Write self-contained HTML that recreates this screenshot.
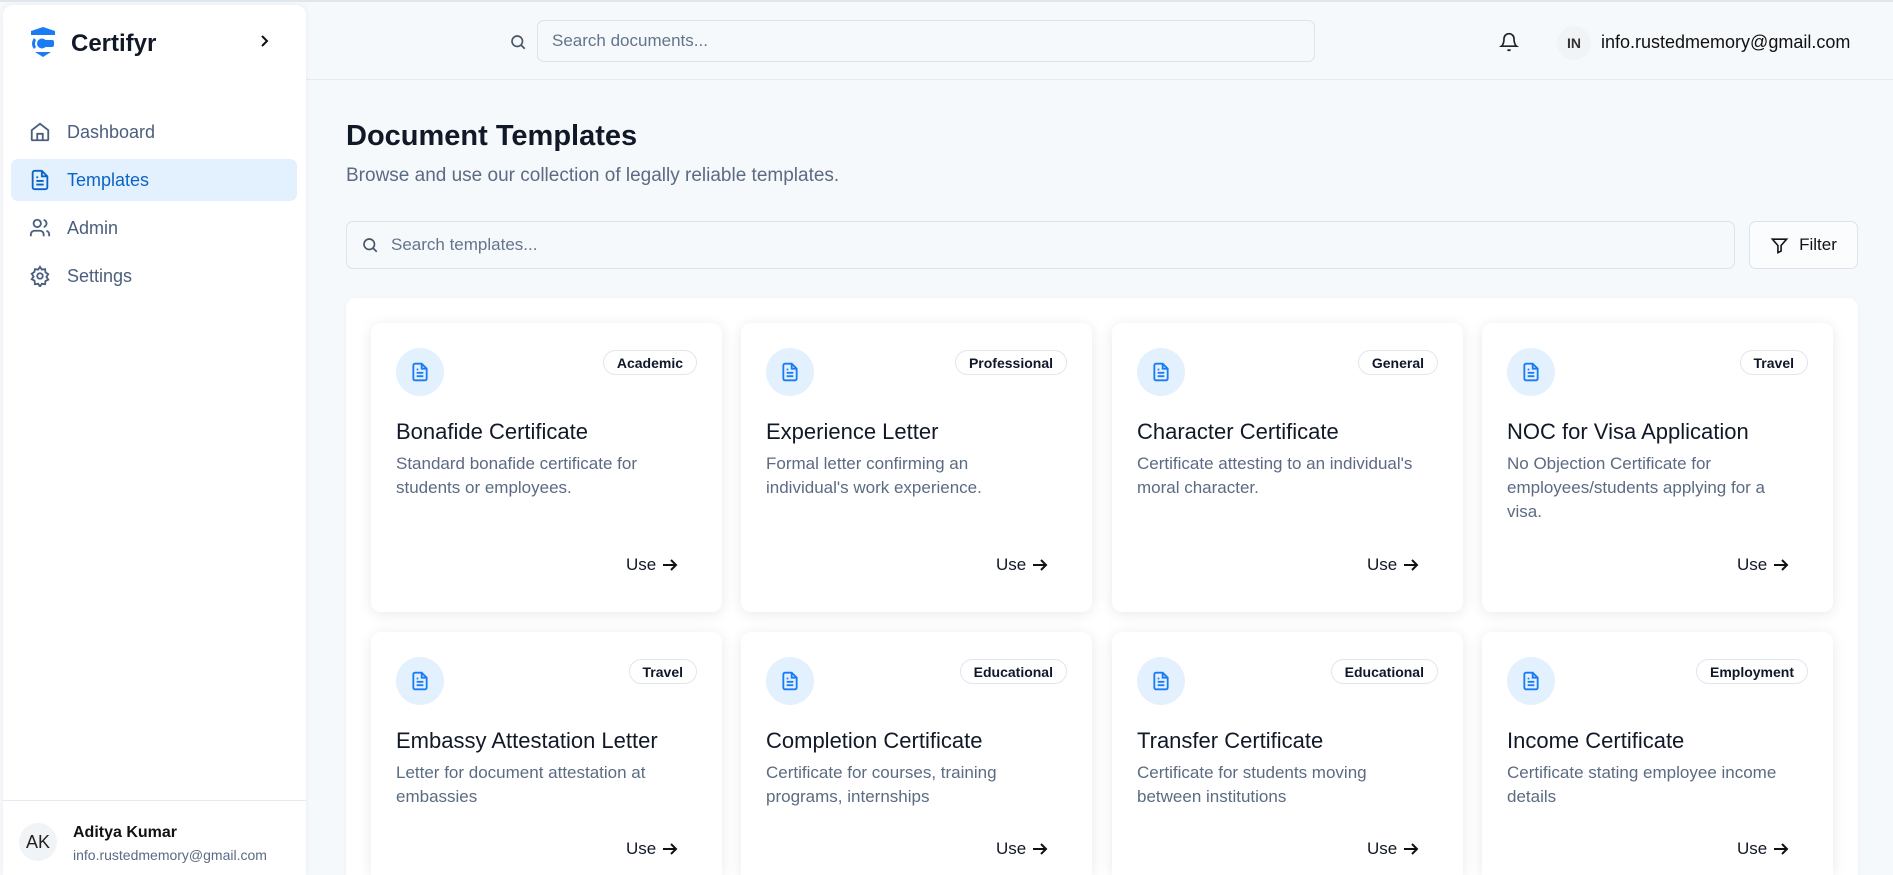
<!DOCTYPE html>
<html><head><meta charset="utf-8"><style>
*{box-sizing:border-box;margin:0;padding:0}
html,body{width:1893px;height:875px;overflow:hidden}
body{background:#f6f9fc;font-family:"Liberation Sans",Arial,sans-serif;color:#0f172a}
#wrap{position:relative;width:1893px;height:875px;overflow:hidden;border-top:2px solid #dfe7ec}
.side{position:absolute;left:3px;top:3px;width:303px;height:870px;background:#fff;border-radius:10px 10px 0 0;box-shadow:0 0 6px rgba(0,0,0,.06);z-index:2}
.logo{position:absolute;left:26px;top:22px;display:flex;align-items:center;gap:14px;font-size:24px;font-weight:bold;color:#111827}
.chev{position:absolute;left:256px;top:29px}
.nav{position:absolute;left:8px;width:286px;height:42px;display:flex;align-items:center;padding-left:18px;gap:16px;font-size:18px;color:#4a5f7d;border-radius:7px}
.nav.act{background:#e3f0fd;color:#0a64c8}
.foot{position:absolute;left:0;top:795px;width:303px;border-top:1px solid #e6ebf0;height:75px}
.av{position:absolute;width:38px;height:38px;border-radius:50%;background:#f1f4f7;display:flex;align-items:center;justify-content:center}
.top{position:absolute;left:306px;top:0;right:0;height:78px;border-bottom:1px solid #e5eaef}
.inp{position:absolute;border:1px solid #dde3ea;border-radius:7px;background:#f6f9fc;display:flex;align-items:center;color:#64748b;font-size:17px}
h1{position:absolute;left:346px;top:118px;font-size:29px;font-weight:bold;color:#111827}
.sub{position:absolute;left:346px;top:163px;font-size:19px;color:#5b6b82}
.panel{position:absolute;left:346px;top:296px;width:1512px;height:577px;background:#fff;border-radius:10px 10px 0 0;box-shadow:0 1px 4px rgba(0,0,0,.05)}
.card{position:absolute;width:351px;height:289px;background:#fff;border-radius:10px;box-shadow:0 2px 14px rgba(0,0,0,.09)}
.r2{height:243px;border-radius:10px 10px 0 0}
.ic{position:absolute;left:25px;top:25px;width:48px;height:48px;border-radius:50%;background:#e3f0fd;display:flex;align-items:center;justify-content:center}
.bd{position:absolute;right:25px;top:27px;height:25px;padding:0 13px;border:1px solid #e1e6ec;border-radius:13px;font-size:14px;font-weight:bold;display:flex;align-items:center}
.ct{position:absolute;left:25px;top:96px;font-size:22px;color:#111827}
.cd{position:absolute;left:25px;top:129px;white-space:nowrap;font-size:17px;line-height:24px;color:#5b6b82}
.use{position:absolute;left:255px;top:232px;font-size:17px;display:flex;align-items:center;gap:6px;color:#111827}
.r2 .use{top:207px}
</style></head><body><div id="wrap">
<div class="side">
 <div class="logo"><svg width="28" height="34" viewBox="0 0 28 34"><path d="M2 4 L14 0 L26 4 L26 8 L2 8Z" fill="#1a7cf5"/><path d="M5 11 Q1 17 5 22 L7 20 Q5 17 7 13Z" fill="#1a7cf5"/><circle cx="13" cy="16.5" r="5" fill="#1a7cf5"/><rect x="13" y="13" width="12" height="7" rx="2" fill="#1a7cf5"/><path d="M6 25 L22 25 L14 30Z" fill="#1a7cf5"/></svg>Certifyr</div>
 <svg class="chev" width="12" height="14" viewBox="0 0 12 14"><path d="M3 2 L8 7 L3 12" stroke="#111" stroke-width="2" fill="none"/></svg>
 <div class="nav" style="top:106px"><svg width="22" height="22" viewBox="0 0 24 24" fill="none" stroke="#4a5f7d" stroke-width="2"><path d="M3 10 L12 3 L21 10 V20 a1 1 0 0 1-1 1 H4 a1 1 0 0 1-1-1Z"/><path d="M9 21 V14 H15 V21"/></svg>Dashboard</div>
 <div class="nav act" style="top:154px"><svg width="22" height="22" viewBox="0 0 24 24" fill="none" stroke="#0a64c8" stroke-width="2"><path d="M14 2H6a2 2 0 0 0-2 2v16a2 2 0 0 0 2 2h12a2 2 0 0 0 2-2V8z"/><path d="M14 2v6h6M8 13h8M8 17h8M8 9h2"/></svg>Templates</div>
 <div class="nav" style="top:202px"><svg width="22" height="22" viewBox="0 0 24 24" fill="none" stroke="#4a5f7d" stroke-width="2"><circle cx="9" cy="7" r="4"/><path d="M2 21v-2a4 4 0 0 1 4-4h6a4 4 0 0 1 4 4v2M16 3.1a4 4 0 0 1 0 7.8M22 21v-2a4 4 0 0 0-3-3.9"/></svg>Admin</div>
 <div class="nav" style="top:250px"><svg width="22" height="22" viewBox="0 0 24 24" fill="none" stroke="#4a5f7d" stroke-width="2"><circle cx="12" cy="12" r="3"/><path d="M12 2l2 3 3.5-.5.5 3.5 3 2-2 3 2 3-3 1.5-.5 3.5-3.5-.5-2 3-2-3-3.5.5L6 17l-3-1.5 2-3-2-3 3-2L6.5 4.5 10 5z"/></svg>Settings</div>
 <div class="foot">
  <div class="av" style="left:16px;top:22px;font-size:18px;color:#222">AK</div>
  <div style="position:absolute;left:70px;top:23px;font-size:16px;font-weight:bold;color:#111">Aditya Kumar</div>
  <div style="position:absolute;left:70px;top:46px;font-size:14px;color:#5b6b82">info.rustedmemory@gmail.com</div>
 </div>
</div>
<div class="top">
 <svg style="position:absolute;left:203px;top:31px" width="18" height="18" viewBox="0 0 24 24" fill="none" stroke="#475569" stroke-width="2.2"><circle cx="11" cy="11" r="7"/><path d="M21 21l-5-5"/></svg>
 <div class="inp" style="left:231px;top:18px;width:778px;height:42px;padding-left:14px">Search documents...</div>
 <svg style="position:absolute;left:1193px;top:29px" width="20" height="22" viewBox="0 0 24 24" fill="none" stroke="#222" stroke-width="2"><path d="M6 8a6 6 0 0 1 12 0c0 7 3 9 3 9H3s3-2 3-9M10.3 21a1.9 1.9 0 0 0 3.4 0"/></svg>
 <div class="av" style="left:1251px;top:24px;width:34px;height:34px;font-size:14px;font-weight:bold;color:#333">IN</div>
 <div style="position:absolute;left:1295px;top:30px;font-size:18px;color:#111">info.rustedmemory@gmail.com</div>
</div>
<h1>Document Templates</h1>
<div class="sub">Browse and use our collection of legally reliable templates.</div>
<div class="inp" style="left:346px;top:219px;width:1389px;height:48px;padding-left:44px">Search templates...</div>
<svg style="position:absolute;left:361px;top:234px" width="18" height="18" viewBox="0 0 24 24" fill="none" stroke="#475569" stroke-width="2.2"><circle cx="11" cy="11" r="7"/><path d="M21 21l-5-5"/></svg>
<div class="inp" style="left:1749px;top:219px;width:109px;height:48px;background:#fbfcfd;color:#111;justify-content:center;gap:10px"><svg width="19" height="19" viewBox="0 0 24 24" fill="none" stroke="#111" stroke-width="2"><path d="M3 4h18l-7 8v7l-4 2v-9z"/></svg>Filter</div>
<div class="panel"></div>
<div class="card" style="left:371px;top:321px"><div class="ic"><svg width="20" height="22" viewBox="0 0 24 24" fill="none" stroke="#1a7cf5" stroke-width="2.2"><path d="M14 2H6a2 2 0 0 0-2 2v16a2 2 0 0 0 2 2h12a2 2 0 0 0 2-2V8z"/><path d="M14 2v6h6M8 13h8M8 17h8M8 9h2"/></svg></div><div class="bd">Academic</div><div class="ct">Bonafide Certificate</div><div class="cd">Standard bonafide certificate for<br>students or employees.</div><div class="use">Use <svg width="16" height="14" viewBox="0 0 16 14" fill="none" stroke="#111" stroke-width="2"><path d="M1 7h13M9 2l5 5-5 5"/></svg></div></div>
<div class="card" style="left:741px;top:321px"><div class="ic"><svg width="20" height="22" viewBox="0 0 24 24" fill="none" stroke="#1a7cf5" stroke-width="2.2"><path d="M14 2H6a2 2 0 0 0-2 2v16a2 2 0 0 0 2 2h12a2 2 0 0 0 2-2V8z"/><path d="M14 2v6h6M8 13h8M8 17h8M8 9h2"/></svg></div><div class="bd">Professional</div><div class="ct">Experience Letter</div><div class="cd">Formal letter confirming an<br>individual's work experience.</div><div class="use">Use <svg width="16" height="14" viewBox="0 0 16 14" fill="none" stroke="#111" stroke-width="2"><path d="M1 7h13M9 2l5 5-5 5"/></svg></div></div>
<div class="card" style="left:1112px;top:321px"><div class="ic"><svg width="20" height="22" viewBox="0 0 24 24" fill="none" stroke="#1a7cf5" stroke-width="2.2"><path d="M14 2H6a2 2 0 0 0-2 2v16a2 2 0 0 0 2 2h12a2 2 0 0 0 2-2V8z"/><path d="M14 2v6h6M8 13h8M8 17h8M8 9h2"/></svg></div><div class="bd">General</div><div class="ct">Character Certificate</div><div class="cd">Certificate attesting to an individual's<br>moral character.</div><div class="use">Use <svg width="16" height="14" viewBox="0 0 16 14" fill="none" stroke="#111" stroke-width="2"><path d="M1 7h13M9 2l5 5-5 5"/></svg></div></div>
<div class="card" style="left:1482px;top:321px"><div class="ic"><svg width="20" height="22" viewBox="0 0 24 24" fill="none" stroke="#1a7cf5" stroke-width="2.2"><path d="M14 2H6a2 2 0 0 0-2 2v16a2 2 0 0 0 2 2h12a2 2 0 0 0 2-2V8z"/><path d="M14 2v6h6M8 13h8M8 17h8M8 9h2"/></svg></div><div class="bd">Travel</div><div class="ct">NOC for Visa Application</div><div class="cd">No Objection Certificate for<br>employees/students applying for a<br>visa.</div><div class="use">Use <svg width="16" height="14" viewBox="0 0 16 14" fill="none" stroke="#111" stroke-width="2"><path d="M1 7h13M9 2l5 5-5 5"/></svg></div></div>
<div class="card r2" style="left:371px;top:630px"><div class="ic"><svg width="20" height="22" viewBox="0 0 24 24" fill="none" stroke="#1a7cf5" stroke-width="2.2"><path d="M14 2H6a2 2 0 0 0-2 2v16a2 2 0 0 0 2 2h12a2 2 0 0 0 2-2V8z"/><path d="M14 2v6h6M8 13h8M8 17h8M8 9h2"/></svg></div><div class="bd">Travel</div><div class="ct">Embassy Attestation Letter</div><div class="cd">Letter for document attestation at<br>embassies</div><div class="use">Use <svg width="16" height="14" viewBox="0 0 16 14" fill="none" stroke="#111" stroke-width="2"><path d="M1 7h13M9 2l5 5-5 5"/></svg></div></div>
<div class="card r2" style="left:741px;top:630px"><div class="ic"><svg width="20" height="22" viewBox="0 0 24 24" fill="none" stroke="#1a7cf5" stroke-width="2.2"><path d="M14 2H6a2 2 0 0 0-2 2v16a2 2 0 0 0 2 2h12a2 2 0 0 0 2-2V8z"/><path d="M14 2v6h6M8 13h8M8 17h8M8 9h2"/></svg></div><div class="bd">Educational</div><div class="ct">Completion Certificate</div><div class="cd">Certificate for courses, training<br>programs, internships</div><div class="use">Use <svg width="16" height="14" viewBox="0 0 16 14" fill="none" stroke="#111" stroke-width="2"><path d="M1 7h13M9 2l5 5-5 5"/></svg></div></div>
<div class="card r2" style="left:1112px;top:630px"><div class="ic"><svg width="20" height="22" viewBox="0 0 24 24" fill="none" stroke="#1a7cf5" stroke-width="2.2"><path d="M14 2H6a2 2 0 0 0-2 2v16a2 2 0 0 0 2 2h12a2 2 0 0 0 2-2V8z"/><path d="M14 2v6h6M8 13h8M8 17h8M8 9h2"/></svg></div><div class="bd">Educational</div><div class="ct">Transfer Certificate</div><div class="cd">Certificate for students moving<br>between institutions</div><div class="use">Use <svg width="16" height="14" viewBox="0 0 16 14" fill="none" stroke="#111" stroke-width="2"><path d="M1 7h13M9 2l5 5-5 5"/></svg></div></div>
<div class="card r2" style="left:1482px;top:630px"><div class="ic"><svg width="20" height="22" viewBox="0 0 24 24" fill="none" stroke="#1a7cf5" stroke-width="2.2"><path d="M14 2H6a2 2 0 0 0-2 2v16a2 2 0 0 0 2 2h12a2 2 0 0 0 2-2V8z"/><path d="M14 2v6h6M8 13h8M8 17h8M8 9h2"/></svg></div><div class="bd">Employment</div><div class="ct">Income Certificate</div><div class="cd">Certificate stating employee income<br>details</div><div class="use">Use <svg width="16" height="14" viewBox="0 0 16 14" fill="none" stroke="#111" stroke-width="2"><path d="M1 7h13M9 2l5 5-5 5"/></svg></div></div>
</div></body></html>
